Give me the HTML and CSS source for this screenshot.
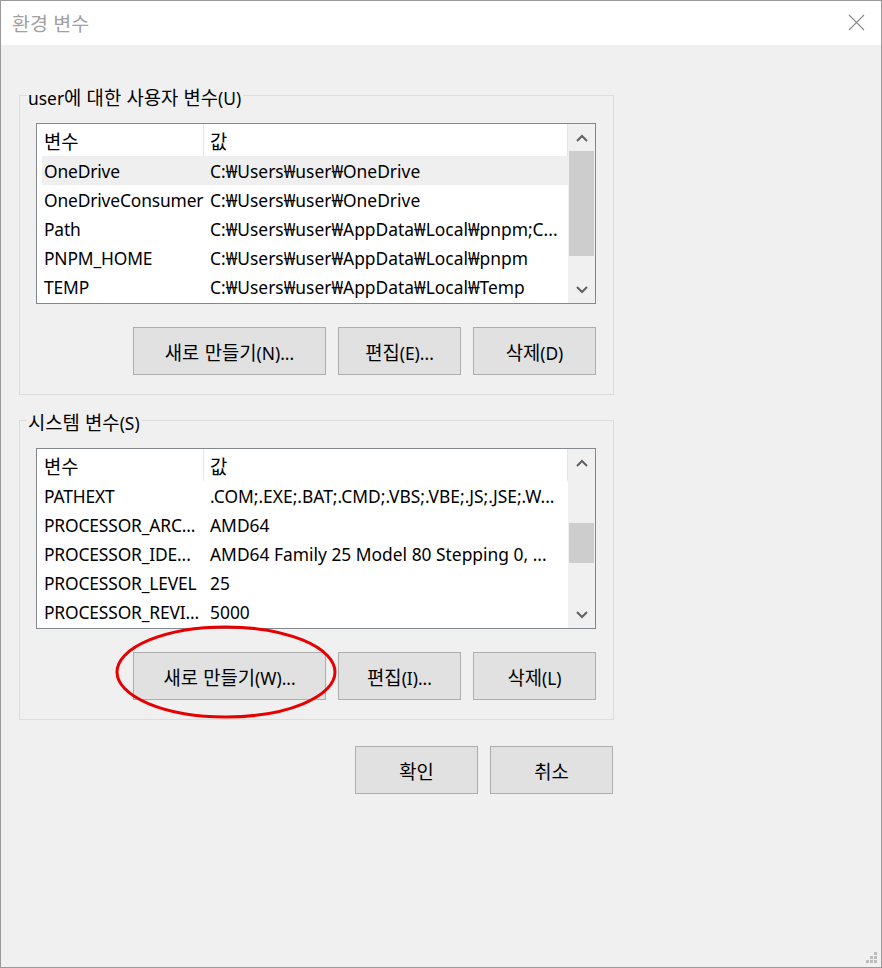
FILE: index.html
```html
<!DOCTYPE html>
<html lang="ko">
<head>
<meta charset="utf-8">
<title>환경 변수</title>
<link rel="stylesheet" href="styles.css">
</head>
<body>
<div class="window">
  <div class="titlebar">
    <span class="title">환경 변수</span>
    <svg class="close" width="17" height="17" viewBox="0 0 17 17"><path d="M1 1 L16 16 M16 1 L1 16" stroke="#8a8a8a" stroke-width="1.1" fill="none"/></svg>
  </div>
  <div class="content">
    <div class="group">
      <div class="legend">user<span class="ko">에 대한 사용자 변수</span>(U)</div>
      <div class="list">
        <div class="list-main">
          <div class="list-head">
            <div class="hcell c1"><span class="ko">변수</span></div>
            <div class="hcell c2"><span class="ko">값</span></div>
          </div>
          <div class="row selected"><div class="cell c1">OneDrive</div><div class="cell c2">C:₩Users₩user₩OneDrive</div></div>
          <div class="row"><div class="cell c1">OneDriveConsumer</div><div class="cell c2">C:₩Users₩user₩OneDrive</div></div>
          <div class="row"><div class="cell c1">Path</div><div class="cell c2">C:₩Users₩user₩AppData₩Local₩pnpm;C...</div></div>
          <div class="row"><div class="cell c1">PNPM_HOME</div><div class="cell c2">C:₩Users₩user₩AppData₩Local₩pnpm</div></div>
          <div class="row"><div class="cell c1">TEMP</div><div class="cell c2">C:₩Users₩user₩AppData₩Local₩Temp</div></div>
        </div>
        <div class="scrollbar">
          <div class="arrow"><svg width="12" height="8" viewBox="0 0 12 8"><path d="M1 7 L6 2 L11 7" stroke="#606060" stroke-width="2" fill="none"/></svg></div>
          <div class="track"><div class="thumb thumb-user"></div></div>
          <div class="arrow"><svg width="12" height="8" viewBox="0 0 12 8"><path d="M1 1 L6 6 L11 1" stroke="#606060" stroke-width="2" fill="none"/></svg></div>
        </div>
      </div>
      <div class="buttons">
        <button class="btn wide"><span class="ko">새로 만들기</span>(N)...</button>
        <button class="btn"><span class="ko">편집</span>(E)...</button>
        <button class="btn"><span class="ko">삭제</span>(D)</button>
      </div>
    </div>

    <div class="group group2">
      <div class="legend"><span class="ko">시스템 변수</span>(S)</div>
      <div class="list">
        <div class="list-main">
          <div class="list-head">
            <div class="hcell c1"><span class="ko">변수</span></div>
            <div class="hcell c2"><span class="ko">값</span></div>
          </div>
          <div class="row"><div class="cell c1">PATHEXT</div><div class="cell c2">.COM;.EXE;.BAT;.CMD;.VBS;.VBE;.JS;.JSE;.W...</div></div>
          <div class="row"><div class="cell c1">PROCESSOR_ARC...</div><div class="cell c2">AMD64</div></div>
          <div class="row"><div class="cell c1">PROCESSOR_IDE...</div><div class="cell c2">AMD64 Family 25 Model 80 Stepping 0, ...</div></div>
          <div class="row"><div class="cell c1">PROCESSOR_LEVEL</div><div class="cell c2">25</div></div>
          <div class="row"><div class="cell c1">PROCESSOR_REVI...</div><div class="cell c2">5000</div></div>
        </div>
        <div class="scrollbar">
          <div class="arrow"><svg width="12" height="8" viewBox="0 0 12 8"><path d="M1 7 L6 2 L11 7" stroke="#606060" stroke-width="2" fill="none"/></svg></div>
          <div class="track"><div class="thumb thumb-system"></div></div>
          <div class="arrow"><svg width="12" height="8" viewBox="0 0 12 8"><path d="M1 1 L6 6 L11 1" stroke="#606060" stroke-width="2" fill="none"/></svg></div>
        </div>
      </div>
      <div class="buttons">
        <button class="btn wide"><span class="ko">새로 만들기</span>(W)...</button>
        <button class="btn"><span class="ko">편집</span>(I)...</button>
        <button class="btn"><span class="ko">삭제</span>(L)</button>
      </div>
    </div>

    <div class="dialog-buttons">
      <button class="btn"><span class="ko">확인</span></button>
      <button class="btn"><span class="ko">취소</span></button>
    </div>
  </div>

  <svg class="annotation" width="230" height="100" viewBox="0 0 230 100"><ellipse cx="115" cy="50" rx="109" ry="45" stroke="#e60000" stroke-width="3" fill="none"/></svg>

  <svg class="grip" width="12" height="12" viewBox="0 0 12 12">
    <rect x="8" y="0" width="3" height="3" fill="#bdbdbd"/>
    <rect x="4" y="4" width="3" height="3" fill="#bdbdbd"/>
    <rect x="8" y="4" width="3" height="3" fill="#bdbdbd"/>
    <rect x="0" y="8" width="3" height="3" fill="#bdbdbd"/>
    <rect x="4" y="8" width="3" height="3" fill="#bdbdbd"/>
    <rect x="8" y="8" width="3" height="3" fill="#bdbdbd"/>
  </svg>
</div>
</body>
</html>
```

FILE: styles.css
```css
* { box-sizing: border-box; }

html, body {
  margin: 0;
  padding: 0;
  background: #f0f0f0;
}

body {
  font-family: "Noto Sans", "Noto Sans CJK KR", sans-serif;
  font-size: 17.4px;
  color: #000;
}

.ko {
  font-family: "Noto Sans CJK KR", sans-serif;
  font-size: 18.8px;
}

.window {
  position: relative;
  width: 882px;
  height: 968px;
  border: 1px solid #9a9a9a;
  background: #f0f0f0;
  overflow: hidden;
}

.titlebar {
  height: 44px;
  background: #fff;
  display: flex;
  align-items: center;
  justify-content: space-between;
  padding: 0 16px 0 11px;
}

.title {
  font-family: "Noto Sans CJK KR", sans-serif;
  font-size: 19.5px;
  color: #a0a0a0;
  margin-top: -1px;
}

.close {
  margin-top: -1px;
}

.content {
  padding: 50px 0 0 18px;
  display: flex;
  flex-direction: column;
}

.group {
  width: 595px;
  border: 1px solid #dcdcdc;
  padding: 0 17px 19px 16px;
  display: flex;
  flex-direction: column;
}

.group2 {
  margin-top: 25px;
}

.legend {
  align-self: flex-start;
  height: 26px;
  line-height: 26px;
  margin: -12px 0 0 -9px;
  padding: 0 2px 0 1px;
  background: #f0f0f0;
  white-space: nowrap;
}

.list {
  margin-top: 13px;
  height: 181px;
  border: 1px solid #828790;
  background: #fff;
  display: flex;
}

.list-main {
  flex: 1;
  min-width: 0;
  display: flex;
  flex-direction: column;
}

.list-head {
  height: 32px;
  display: flex;
}

.hcell {
  height: 32px;
  line-height: 30px;
  padding-top: 2px;
  white-space: nowrap;
}

.hcell.c1 {
  width: 167px;
  padding-left: 7px;
  border-right: 1px solid #e5e5e5;
}

.hcell.c2 {
  flex: 1;
  padding-left: 6px;
  border-right: 1px solid #e5e5e5;
}

.row {
  height: 29px;
  line-height: 29px;
  margin-left: 5px;
  display: flex;
  white-space: nowrap;
}

.row.selected {
  background: #efefef;
}

.cell {
  padding-top: 1px;
}

.cell.c1 {
  width: 161px;
  flex-shrink: 0;
  padding-left: 2px;
  letter-spacing: -0.15px;
  overflow: visible;
}

.cell.c2 {
  flex: 1;
  min-width: 0;
  padding-left: 7px;
  overflow: hidden;
}

.scrollbar {
  width: 27px;
  background: #f0f0f0;
  display: flex;
  flex-direction: column;
}

.arrow {
  height: 27px;
  display: flex;
  align-items: center;
  justify-content: center;
  padding-left: 1px;
}

.track {
  flex: 1;
  padding: 0 1px;
}

.thumb {
  background: #cdcdcd;
}

.thumb-user {
  height: 105px;
}

.thumb-system {
  margin-top: 47px;
  height: 40px;
}

.buttons {
  margin-top: 23px;
  display: flex;
  justify-content: flex-end;
  gap: 12px;
}

.btn {
  width: 123px;
  height: 48px;
  border: 1px solid #adadad;
  background: #e1e1e1;
  font-family: "Noto Sans", "Noto Sans CJK KR", sans-serif;
  font-size: 17.4px;
  color: #000;
  padding: 0;
  margin: 0;
}

.btn.wide {
  width: 193px;
}

.dialog-buttons {
  width: 595px;
  margin-top: 26px;
  padding-right: 1px;
  display: flex;
  justify-content: flex-end;
  gap: 12px;
}

.annotation {
  position: absolute;
  left: 110px;
  top: 621px;
}

.grip {
  position: absolute;
  right: 3px;
  bottom: 3px;
}
```
